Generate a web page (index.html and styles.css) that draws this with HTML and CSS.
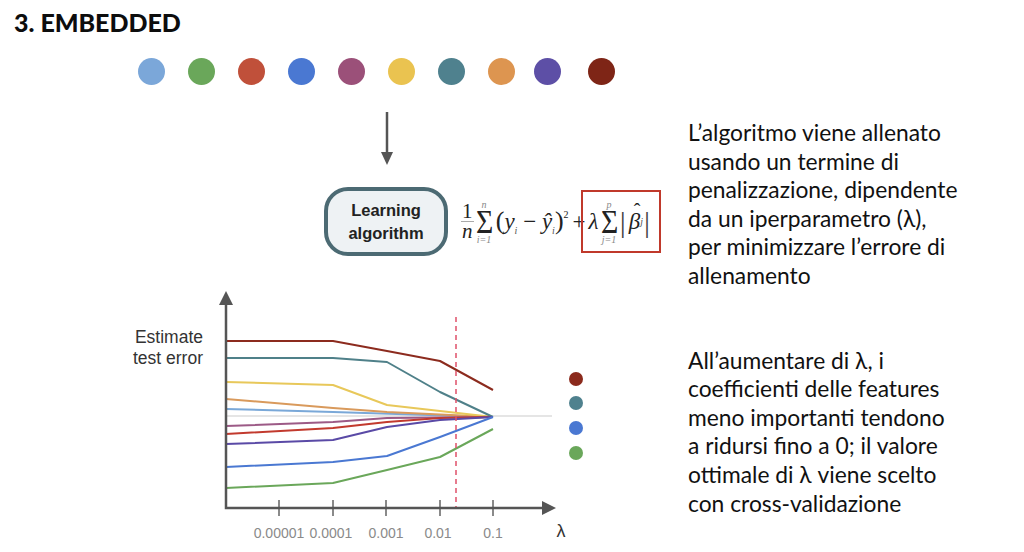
FILE: index.html
```html
<!DOCTYPE html>
<html lang="it">
<head>
<meta charset="utf-8">
<title>3. Embedded</title>
<link rel="stylesheet" href="styles.css">
</head>
<body>
<div class="page">
  <div class="left">
    <h1 class="title">3. EMBEDDED</h1>
    <div class="dots">
      <span class="dot c1"></span><span class="dot c2"></span><span class="dot c3"></span><span class="dot c4"></span><span class="dot c5"></span>
      <span class="dot c6"></span><span class="dot c7"></span><span class="dot c8"></span><span class="dot c9"></span><span class="dot c10"></span>
    </div>
    <svg class="arrow" width="12" height="53" viewBox="0 0 12 53">
      <line x1="6" y1="0" x2="6" y2="42" stroke="#555" stroke-width="2.5"/>
      <polygon points="0,40 12,40 6,53" fill="#555"/>
    </svg>
    <div class="algo-row">
      <div class="box">Learning<br>algorithm</div>
      <div class="formula">
        <span class="frac"><span class="num">1</span><span class="den">n</span></span>
        <span class="sum"><span class="lim">n</span><span class="sig">&Sigma;</span><span class="lim">i=1</span></span>
        <span class="expr"><span class="paren">(</span><i>y</i><sub>i</sub> &minus; <i>&ycirc;</i><sub>i</sub><span class="paren">)</span><sup>2</sup></span>
        <span class="plus">+</span>
        <span class="pen"><i class="lam">&lambda;</i><span class="sum"><span class="lim">p</span><span class="sig">&Sigma;</span><span class="lim">j=1</span></span><span class="bar">|</span><i class="hat">&beta;</i><sub>j</sub><span class="bar">|</span></span>
      </div>
    </div>
    <svg class="chart" width="480" height="267" viewBox="120 285 480 267">
      <text class="ylab" x="203" y="343">Estimate</text>
      <text class="ylab" x="203" y="364">test error</text>
      <line x1="226" y1="416" x2="552" y2="416" stroke="#dcdcdc" stroke-width="1.5"/>
      <g fill="none" stroke-width="2" stroke-linejoin="round">
        <polyline stroke="#7aa8d8" points="226,409 333,412 493,417"/>
        <polyline stroke="#d99a5c" points="226,399 333,408 387,412 493,417"/>
        <polyline stroke="#e8c85a" points="226,382 333,385 387,405 440,411 493,417"/>
        <polyline stroke="#4f8089" points="226,358 333,358 387,362 440,392 493,417"/>
        <polyline stroke="#8c2b1e" points="226,341 333,341 387,351 440,361 493,390"/>
        <polyline stroke="#9c5a86" points="226,426 333,422 387,418 493,417"/>
        <polyline stroke="#c23a2e" points="226,434 333,428 387,422 440,418 493,417"/>
        <polyline stroke="#5a4aa6" points="226,444 333,440 387,427 440,420 493,417"/>
        <polyline stroke="#4a78d2" points="226,467 333,462 387,456 440,437 493,417"/>
        <polyline stroke="#6aa75a" points="226,488 333,483 387,470 440,457 493,429"/>
      </g>
      <line x1="456" y1="317" x2="456" y2="508" stroke="#e0506a" stroke-width="1.5" stroke-dasharray="5 4"/>
      <g stroke="#8a8a8a" stroke-width="2">
        <line x1="279" y1="500" x2="279" y2="516"/>
        <line x1="333" y1="500" x2="333" y2="516"/>
        <line x1="386" y1="500" x2="386" y2="516"/>
        <line x1="440" y1="500" x2="440" y2="516"/>
        <line x1="493" y1="500" x2="493" y2="516"/>
      </g>
      <polyline fill="none" stroke="#555" stroke-width="2.5" points="226,300 226,508 546,508"/>
      <polygon points="226,291 219,305 233,305" fill="#555"/>
      <polygon points="556,508 542,501 542,515" fill="#555"/>
      <text class="tick" x="279" y="538">0.00001</text>
      <text class="tick" x="331" y="538">0.0001</text>
      <text class="tick" x="386" y="538">0.001</text>
      <text class="tick" x="438" y="538">0.01</text>
      <text class="tick" x="493" y="538">0.1</text>
      <text class="lambda" x="561" y="537">&lambda;</text>
      <circle cx="576" cy="379" r="7" fill="#8b2a1c"/>
      <circle cx="576" cy="403" r="7" fill="#4f818e"/>
      <circle cx="576" cy="428" r="7" fill="#4a78d2"/>
      <circle cx="576" cy="453" r="7" fill="#6aa75a"/>
    </svg>
  </div>
  <div class="right">
    <p>L’algoritmo viene allenato<br>usando un termine di<br>penalizzazione, dipendente<br>da un iperparametro (λ),<br>per minimizzare l’errore di<br>allenamento</p>
    <p>All’aumentare di λ, i<br>coefficienti delle features<br>meno importanti tendono<br>a ridursi fino a 0; il valore<br>ottimale di λ viene scelto<br>con cross-validazione</p>
  </div>
</div>
</body>
</html>
```

FILE: styles.css
```css
* { box-sizing: border-box; }
html, body { margin: 0; padding: 0; }
body {
  width: 1024px;
  height: 552px;
  overflow: hidden;
  background: #fff;
  font-family: "Liberation Sans", Arial, sans-serif;
  color: #111;
}
.page { display: flex; height: 552px; }
.left { width: 670px; display: flex; flex-direction: column; }

.title {
  margin: 0;
  padding: 7px 0 0 14px;
  height: 44px;
  font-family: Lato, "Open Sans", sans-serif;
  font-weight: 900;
  font-size: 25px;
  line-height: 30px;
  color: #0d0d0d;
}

.dots { display: flex; gap: 23px; padding-left: 138px; margin-top: 14px; }
.dot { width: 27px; height: 27px; border-radius: 50%; flex: none; }
.c1 { background: #7ba7d9; }
.c2 { background: #6aa75a; }
.c3 { background: #c0503a; }
.c4 { background: #4a78d2; }
.c5 { background: #9b5079; }
.c6 { background: #eac350; }
.c7 { background: #4f818e; }
.c8 { background: #dd9550; }
.c9 { background: #5d4fa6; margin-left: -4px; }
.c10 { background: #7e2516; margin-left: 4px; }

.arrow { display: block; margin: 27px 0 0 381px; }

.algo-row {
  display: flex;
  align-items: center;
  margin-top: 22px;
  padding-left: 324px;
  gap: 13px;
}
.box {
  width: 124px;
  height: 69px;
  border: 4px solid #4c6a73;
  border-radius: 24px;
  background: #eef2f4;
  display: flex;
  align-items: center;
  justify-content: center;
  text-align: center;
  font-weight: bold;
  font-size: 16.5px;
  line-height: 23px;
  color: #222;
}

.formula {
  display: flex;
  align-items: center;
  font-family: "Liberation Serif", "Times New Roman", serif;
  font-size: 23px;
  color: #222;
}
.formula sub { font-size: 10px; vertical-align: -5px; font-style: italic; color: #555; line-height: 0; }
.formula sup { font-size: 10px; vertical-align: 11px; line-height: 0; }
.frac {
  display: inline-flex;
  flex-direction: column;
  align-items: center;
  font-size: 21px;
  line-height: 19px;
  margin-right: 1px;
}
.frac .num { padding: 0 1px; border-bottom: 1px solid #aaa; }
.frac .den { font-style: italic; }
.sum {
  display: inline-flex;
  flex-direction: column;
  align-items: center;
  line-height: 1;
}
.sum .lim { font-size: 10px; color: #888; font-style: italic; line-height: 11px; }
.sum .sig { font-size: 33px; line-height: 24px; transform: scaleX(0.9); }
.expr { margin-left: 2px; white-space: nowrap; line-height: 28px; }
.paren { font-size: 26px; }
.plus { margin-left: 4px; }
.pen {
  display: inline-flex;
  align-items: center;
  height: 63px;
  margin-left: -5px;
  padding: 0 8px 0 6px;
  border: 2px solid #c0392b;
}
.lam { margin-right: 1px; }
.bar { font-size: 30px; line-height: 28px; color: #444; margin: 0 1px; }
.hat { position: relative; display: inline-block; margin-left: 2px; }
.hat::after {
  content: "ˆ";
  position: absolute;
  left: 5px;
  top: -9px;
  font-style: normal;
  font-size: 20px;
}

.chart { display: block; margin: 29px 0 0 120px; }
.ylab { font-family: "Liberation Sans", Arial, sans-serif; font-size: 17.5px; fill: #333; text-anchor: end; }
.tick { font-family: "Liberation Sans", Arial, sans-serif; font-size: 14px; fill: #8a8a8a; text-anchor: middle; }
.lambda { font-family: "Liberation Sans", Arial, sans-serif; font-size: 18px; fill: #333; text-anchor: middle; }

.right {
  padding: 118px 0 0 18px;
  font-family: Lato, "Open Sans", sans-serif;
  font-size: 22.8px;
  line-height: 28.6px;
  color: #111;
}
.right p { margin: 0; }
.right p + p { margin-top: 56px; }
```
